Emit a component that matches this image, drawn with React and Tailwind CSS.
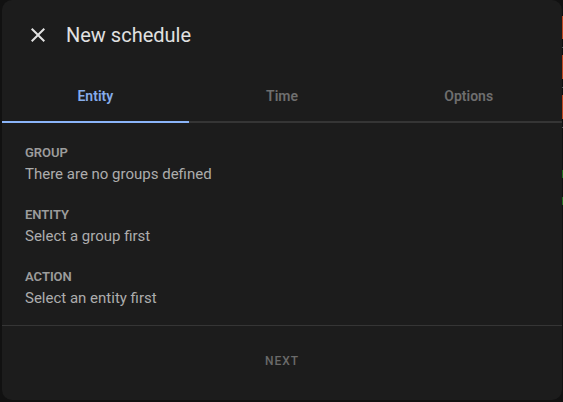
import React, { useState } from 'react';

const tabs = ['Entity', 'Time', 'Options'];

const fields = [
    { label: 'GROUP', value: 'There are no groups defined' },
    { label: 'ENTITY', value: 'Select a group first' },
    { label: 'ACTION', value: 'Select an entity first' },
];

export default function App() {
    const [active, setActive] = useState(0);

    return (
        <div className="w-[563px] h-[402px] bg-[#111111] flex overflow-hidden" style={{ fontFamily: 'Roboto, "Noto Sans", sans-serif' }}>
            <div className="w-[2px] shrink-0" />
            <div className="w-[560px] h-[400px] bg-[#1c1c1c] rounded-[10px] flex flex-col shrink-0">
                {/* header */}
                <div className="h-[70px] flex items-center pl-[24px] gap-[16px]">
                    <button className="w-6 h-6 flex items-center justify-center text-[#e1e1e1]">
                        <svg width="24" height="24" viewBox="0 0 24 24" fill="currentColor"><path d="M19,6.41L17.59,5L12,10.59L6.41,5L5,6.41L10.59,12L5,17.59L6.41,19L12,13.41L17.59,19L19,17.59L13.41,12L19,6.41Z" /></svg>
                    </button>
                    <h2 className="text-[20px] text-[#e1e1e1] leading-none">New schedule</h2>
                </div>

                {/* tabs */}
                <div className="mt-[3px] flex border-b-2 border-[#353535]">
                    {tabs.map((t, i) => (
                        <button
                            key={t}
                            onClick={() => setActive(i)}
                            className={`flex-1 h-[50px] -mb-[2px] pb-[2px] flex items-center justify-center text-[14px] font-semibold border-b-2 ${i === active ? 'text-[#86acea] border-[#8ab4f8]' : 'text-[#6e6e6e] border-transparent'}`}
                        >
                            {t}
                        </button>
                    ))}
                </div>

                {/* fields */}
                <div className="flex flex-col gap-[23px] pl-[23px] pt-[22px] pb-[17px] border-b border-[#353535]">
                    {fields.map((f) => (
                        <div key={f.label} className="flex flex-col gap-[3px]">
                            <span className="text-[13px] leading-[16px] font-semibold text-[#9c9c9c]">{f.label}</span>
                            <span className="text-[15px] leading-[20px] text-[#adadad]">{f.value}</span>
                        </div>
                    ))}
                </div>

                {/* footer */}
                <div className="flex justify-center pt-[17px]">
                    <button className="h-9 px-4 text-[12px] font-medium tracking-[0.08em] text-[#6a6a6a]">NEXT</button>
                </div>
            </div>

            {/* edge of the page behind the dialog */}
            <div className="w-[1px] shrink-0 flex flex-col">
                <div className="h-[16px]" />
                <div className="h-[23px] bg-[#c0451f]" />
                <div className="h-[8px]" />
                <div className="h-[1px] bg-[#5a5a5a]" />
                <div className="h-[7px]" />
                <div className="h-[24px] bg-[#c0451f]" />
                <div className="h-[8px]" />
                <div className="h-[1px] bg-[#5a5a5a]" />
                <div className="h-[7px]" />
                <div className="h-[24px] bg-[#c0451f]" />
                <div className="h-[8px]" />
                <div className="h-[1px] bg-[#5a5a5a]" />
                <div className="h-[42px]" />
                <div className="h-[8px] bg-[#1e6b1e]" />
                <div className="h-[19px]" />
                <div className="h-[8px] bg-[#1e6b1e]" />
            </div>
        </div>
    );
}
